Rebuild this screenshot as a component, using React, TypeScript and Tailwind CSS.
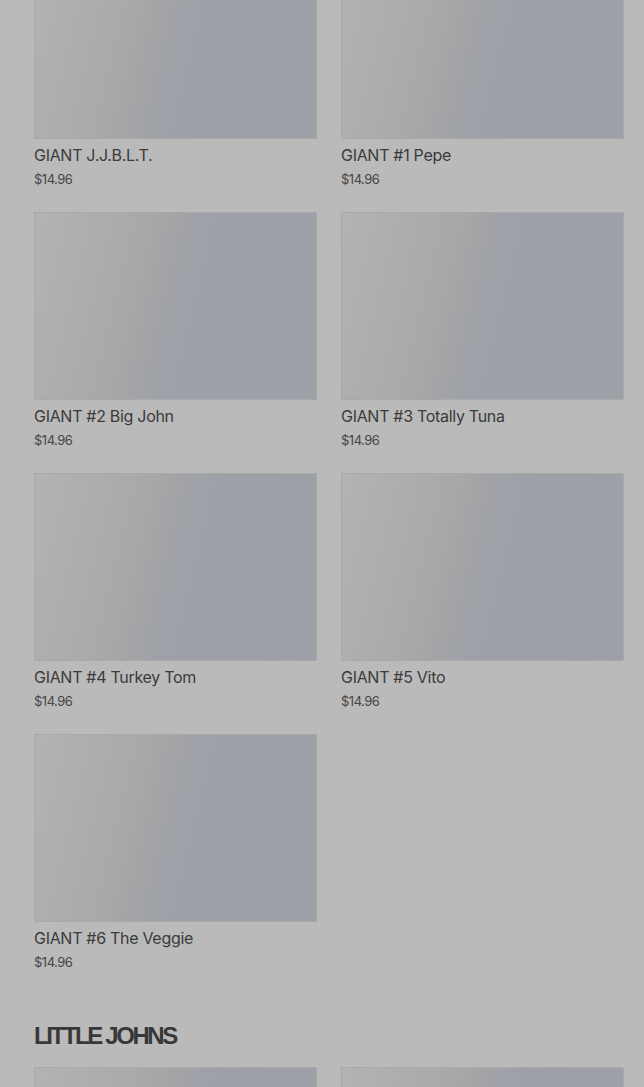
const giants = [
  "GIANT J.J.B.L.T.",
  "GIANT #1 Pepe",
  "GIANT #2 Big John",
  "GIANT #3 Totally Tuna",
  "GIANT #4 Turkey Tom",
  "GIANT #5 Vito",
  "GIANT #6 The Veggie",
];

function Placeholder() {
  return (
    <div className="h-[188px] w-full border border-[#a9a9a9] bg-[linear-gradient(104deg,#b3b3b3_0%,#a8a8a8_36%,#a3a4a6_43%,#9ea1a8_52%,#9da0a7_100%)]" />
  );
}

function ProductCard({ name }: { name: string }) {
  return (
    <div className="flex flex-col">
      <Placeholder />
      <h3 className="mt-[5px] text-[16px] leading-[22px] tracking-[-0.3px] text-[#3b3b3b] font-['Inter',sans-serif]">
        {name}
      </h3>
      <p className="mt-[4px] text-[13px] leading-[18px] tracking-[-0.5px] text-[#454545] font-['Inter',sans-serif]">
        $14.96
      </p>
    </div>
  );
}

export default function App() {
  return (
    <div className="h-[1087px] w-[644px] overflow-hidden bg-[#bababa]">
      <div className="mt-[-49px] pl-[34px] pr-[20px]">
        <div className="grid grid-cols-2 gap-x-[24px] gap-y-[24px]">
          {giants.map((g) => (
            <ProductCard key={g} name={g} />
          ))}
        </div>

        <h2 className="mt-[50px] text-[24px] font-bold leading-[30px] tracking-[-2.4px] text-[#383838] font-['Liberation_Sans',sans-serif]">
          LITTLE JOHNS
        </h2>

        <div className="mt-[16px] grid grid-cols-2 gap-x-[24px] gap-y-[24px]">
          <ProductCard name="LITTLE JOHN #1" />
          <ProductCard name="LITTLE JOHN #2" />
        </div>
      </div>
    </div>
  );
}
